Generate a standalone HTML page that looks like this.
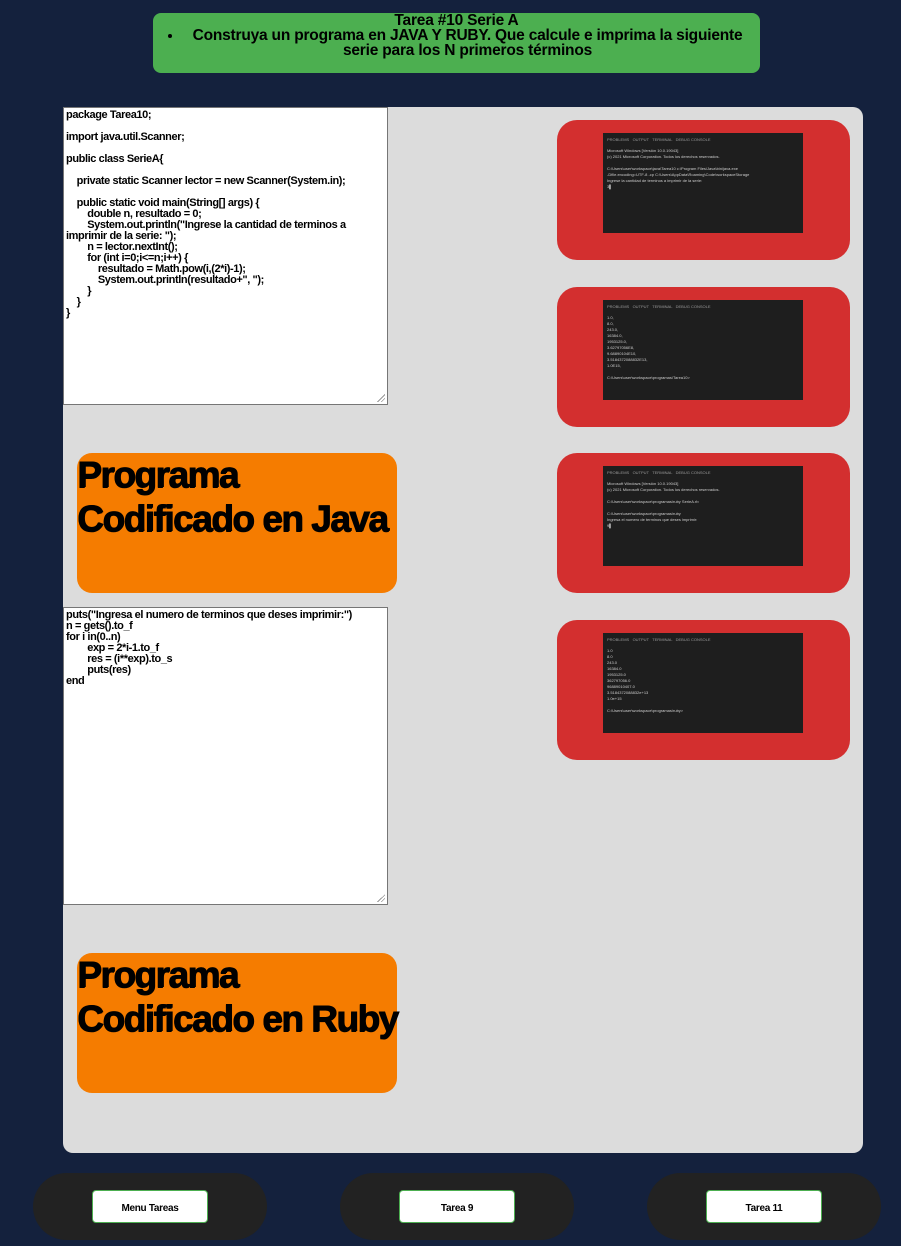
<!DOCTYPE html>
<html><head><meta charset="utf-8"><style>
*{margin:0;padding:0;box-sizing:border-box}
body{width:901px;height:1246px;background:#14213d;font-family:"Liberation Sans",sans-serif;position:relative;overflow:hidden}
.hdr{position:absolute;left:153px;top:13px;width:607px;height:60px;background:#4caf50;border-radius:8px;text-align:center;font-weight:bold;font-size:15.5px;line-height:15px;color:#000;letter-spacing:-0.2px;padding-top:0px}
.hdr ul{list-style:disc;padding-left:30px;padding-right:8px}
.panel{position:absolute;left:63px;top:107px;width:800px;height:1046px;background:#dcdcdc;border-radius:10px}
.ta{position:absolute;left:63px;width:325px;height:298px;background:#fff;border:1px solid #767676;font-weight:bold;font-size:11px;line-height:11px;letter-spacing:-0.4px;white-space:pre-wrap;padding:2px 2px;color:#000}
.ta:after{content:"";position:absolute;right:2px;bottom:2px;width:8px;height:8px;background:linear-gradient(135deg,transparent 50%,#999 50%,#999 58%,transparent 58%,transparent 72%,#999 72%,#999 80%,transparent 80%)}
.or{position:absolute;left:77px;width:320px;height:140px;background:#f57c00;border-radius:15px;font-weight:900;font-size:37px;line-height:44px;letter-spacing:-1.5px;color:#000;padding-top:0;white-space:nowrap;text-shadow:1px 0 0 #000,0 1px 0 #000}
.rd{position:absolute;left:557px;width:293px;height:140px;background:#d32f2f;border-radius:20px}
.sc{position:absolute;left:46px;top:13px;width:200px;height:100px;background:#1e1e1e;font-size:4px;color:#ccc;padding:4px;line-height:6px;overflow:hidden}
.sc .tb{color:#999;margin-bottom:5px}
.pill{position:absolute;top:1173px;width:234px;height:67px;background:#222;border-radius:34px}
.btn{position:absolute;left:59px;top:17px;width:116px;height:33px;background:#fff;border:1px solid #4caf50;border-radius:4px;font-weight:bold;font-size:10px;text-align:center;line-height:36px;letter-spacing:-0.3px}
</style></head><body>
<div class="hdr">Tarea #10 Serie A<ul><li>Construya un programa en JAVA Y RUBY. Que calcule e imprima la siguiente serie para los N primeros términos</li></ul></div>
<div class="panel"></div>
<div class="ta" style="top:107px">package Tarea10;

import java.util.Scanner;

public class SerieA{

    private static Scanner lector = new Scanner(System.in);

    public static void main(String[] args) {
        double n, resultado = 0;
        System.out.println("Ingrese la cantidad de terminos a imprimir de la serie: ");
        n = lector.nextInt();
        for (int i=0;i&lt;=n;i++) {
            resultado = Math.pow(i,(2*i)-1);
            System.out.println(resultado+", ");
        }
    }
}</div>
<div class="or" style="top:453px">Programa<br>Codificado en Java</div>
<div class="ta" style="top:607px">puts("Ingresa el numero de terminos que deses imprimir:")
n = gets().to_f
for i in(0..n)
        exp = 2*i-1.to_f
        res = (i**exp).to_s
        puts(res)
end</div>
<div class="or" style="top:953px">Programa<br>Codificado en Ruby</div>
<div class="rd" style="top:120px"><div class="sc"><div class="tb">PROBLEMS &nbsp; OUTPUT &nbsp; TERMINAL &nbsp; DEBUG CONSOLE</div>Microsoft Windows [Versión 10.0.19043]<br>(c) 2021 Microsoft Corporation. Todos los derechos reservados.<br><br>C:\Users\user\workspace\java\Tarea10 c:\Program Files\Java\bin\java.exe<br>-Dfile.encoding=UTF-8 -cp C:\Users\AppData\Roaming\Code\workspaceStorage<br>Ingrese la cantidad de terminos a imprimir de la serie:<br>3▌</div></div>
<div class="rd" style="top:287px"><div class="sc"><div class="tb">PROBLEMS &nbsp; OUTPUT &nbsp; TERMINAL &nbsp; DEBUG CONSOLE</div>1.0,<br>8.0,<br>243.0,<br>16384.0,<br>1953125.0,<br>3.62797056E8,<br>9.68890104E10,<br>3.5184372088832E13,<br>1.0E15,<br><br>C:\Users\user\workspace\programas\Tarea10&gt;</div></div>
<div class="rd" style="top:453px"><div class="sc"><div class="tb">PROBLEMS &nbsp; OUTPUT &nbsp; TERMINAL &nbsp; DEBUG CONSOLE</div>Microsoft Windows [Versión 10.0.19043]<br>(c) 2021 Microsoft Corporation. Todos los derechos reservados.<br><br>C:\Users\user\workspace\programas\ruby SerieA.rb<br><br>C:\Users\user\workspace\programas\ruby<br>Ingresa el numero de terminos que deses imprimir:<br>9▌</div></div>
<div class="rd" style="top:620px"><div class="sc"><div class="tb">PROBLEMS &nbsp; OUTPUT &nbsp; TERMINAL &nbsp; DEBUG CONSOLE</div>1.0<br>8.0<br>243.0<br>16384.0<br>1953125.0<br>362797056.0<br>96889010407.0<br>3.5184372088832e+13<br>1.0e+15<br><br>C:\Users\user\workspace\programas\ruby&gt;</div></div>
<div class="pill" style="left:33px"><div class="btn">Menu Tareas</div></div>
<div class="pill" style="left:340px"><div class="btn">Tarea 9</div></div>
<div class="pill" style="left:647px"><div class="btn">Tarea 11</div></div>
</body></html>
